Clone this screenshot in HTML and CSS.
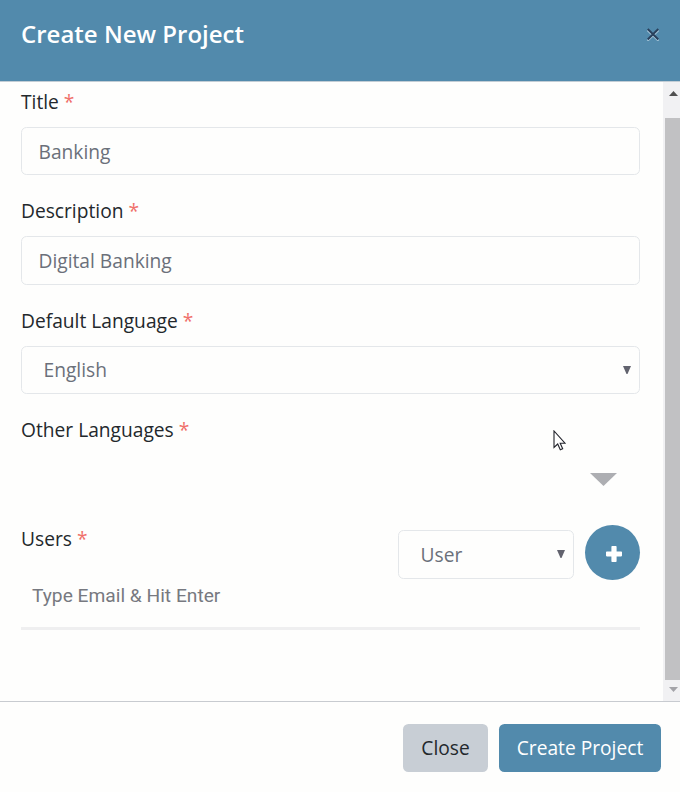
FILE: index.html
```html
<!DOCTYPE html>
<html lang="en">
<head>
<meta charset="utf-8">
<title>Create New Project</title>
<link rel="stylesheet" href="styles.css">
</head>
<body>
<div class="modal">
  <header class="modal-header">
    <h1>Create New Project</h1>
    <button class="dismiss" aria-label="Dismiss"><svg width="14" height="14" viewBox="0 0 14 14"><path class="x-light" d="M1.500 3.300 12.500 13.800M12.500 3.300 1.500 13.800"/><path class="x-dark" d="M1.700 2 12.300 12.500M12.300 2 1.700 12.500"/></svg></button>
  </header>
  <div class="modal-main">
    <main class="form">
      <section class="field">
        <div class="label">Title <span class="req">*</span></div>
        <div class="control short">Banking</div>
      </section>
      <section class="field">
        <div class="label">Description <span class="req">*</span></div>
        <div class="control">Digital Banking</div>
      </section>
      <section class="field">
        <div class="label">Default Language <span class="req">*</span></div>
        <div class="control select">English<svg class="caret" width="8" height="8" viewBox="0 0 8 8"><path d="M0 0H8L4.500 8h-1z"/></svg></div>
      </section>
      <section class="field">
        <div class="label">Other Languages <span class="req">*</span></div>
        <div class="multi"><svg width="27" height="13" viewBox="0 0 27 13"><path d="M0 0H27L13.500 13z"/></svg></div>
      </section>
      <section class="users">
        <div class="label">Users <span class="req">*</span></div>
        <div class="control select role"><span>User</span><svg class="caret" width="8" height="8" viewBox="0 0 8 8"><path d="M0 0H8L4.500 8h-1z"/></svg></div>
        <button class="add" aria-label="Add user"><svg width="16" height="16" viewBox="0 0 16 16"><path d="M6.200 0h3.600q.8 0 .8.8v4.600h4.600q.8 0 .8.8v3.400q0 .8-.8.8h-4.600v4.800q0 .8-.8.8H6.200q-.8 0-.8-.8v-4.800H.8q-.8 0-.8-.8V6.200q0-.8.8-.8h4.600V.8q0-.8.8-.8z"/></svg></button>
      </section>
      <div class="email">Type Email &amp; Hit Enter</div>
    </main>
    <div class="scrollbar">
      <div class="arrow up"><svg width="9" height="5" viewBox="0 0 9 5"><path d="M0 5 4.500 0 9 5z"/></svg></div>
      <div class="thumb"></div>
      <div class="arrow down"><svg width="9" height="5" viewBox="0 0 9 5"><path d="M0 0H9L4.500 5z"/></svg></div>
    </div>
  </div>
  <footer class="modal-footer">
    <button class="btn close">Close</button>
    <button class="btn primary">Create Project</button>
  </footer>
  <svg class="cursor" width="13" height="21" viewBox="0 0 13 21"><path d="M1 1v16.500l3.700-3.500 2.600 5.800 2.400-1.100-2.500-5.500h4.800z"/></svg>
</div>
</body>
</html>
```
FILE: styles.css
```css
* { box-sizing: border-box; }
body { margin: 0; font-family: "Open Sans", sans-serif; font-size: 19.2px; color: #23282c; background: #fefefd; }
button { border: 0; padding: 0; font: inherit; }
svg { display: block; }
.modal { position: relative; width: 680px; height: 792px; display: flex; flex-direction: column; overflow: hidden; }
.modal-header { height: 82px; flex: none; background: #528aac; border-bottom: 1px solid #c2cdd5; display: flex; justify-content: space-between; align-items: flex-start; padding: 16px 20px 0 21px; }
h1 { margin: 0; font-size: 24px; line-height: 35px; font-weight: 600; color: #fff; }
.dismiss { background: none; margin-top: 11px; }
.x-light, .x-dark { fill: none; stroke-width: 1.9; }
.x-light { stroke: #a9c8db; }
.x-dark { stroke: #29405c; }
.modal-main { flex: none; height: 619px; display: flex; }
.form { flex: 1; padding: 6px 23px 0 21px; }
.field { height: 109.250px; }
.label { height: 39px; line-height: 28px; }
.req { color: #f0706b; }
.control { height: 48.500px; border: 1px solid #e4e7ea; border-radius: 5.500px; color: #6b707a; padding: 0 17px 0 16.500px; line-height: 48px; }
.short { height: 48px; }
.select { display: flex; justify-content: space-between; align-items: center; padding: 0 8px 0 21.500px; line-height: 46px; }
.caret { fill: #62636e; }
.multi { display: flex; justify-content: flex-end; padding: 18px 23px 0 0; }
.multi svg { fill: #adaeb2; }
.users { height: 60px; display: flex; }
.users .label { flex: 1; }
.role { width: 176px; margin: 5px 11px 0 0; }
.role span { padding-top: 2px; }
.add { width: 55px; height: 55px; border-radius: 50%; background: #528aac; display: flex; align-items: center; justify-content: center; padding: 2px 0 0 2px; }
.add svg { fill: #fff; }
.email { font-family: Roboto, sans-serif; font-size: 19.2px; color: #777980; height: 45px; line-height: 22px; border-bottom: 3px solid #efeff0; padding-left: 11px; }
.scrollbar { width: 17px; background: #f1f1f3; display: flex; flex-direction: column; }
.arrow { display: flex; justify-content: center; padding-left: 4px; flex: none; }
.up { height: 36px; padding-top: 9px; }
.up svg { fill: #505050; }
.thumb { flex: 1; margin-left: 2px; background: #c1c1c3; }
.down { height: 21px; padding-top: 7px; }
.down svg { fill: #a3a3a8; }
.modal-footer { flex: 1; border-top: 1px solid #c8cbd0; display: flex; justify-content: flex-end; padding: 22px 19px 0 0; gap: 11px; }
.btn { height: 48px; border-radius: 5.500px; line-height: 48px; }
.close { width: 85px; background: #c8ced5; color: #23282c; }
.primary { width: 162px; background: #528aac; color: #fff; }
.cursor { position: absolute; left: 553px; top: 430px; fill: #fff; stroke: #22232b; stroke-width: 1.1; }
```
